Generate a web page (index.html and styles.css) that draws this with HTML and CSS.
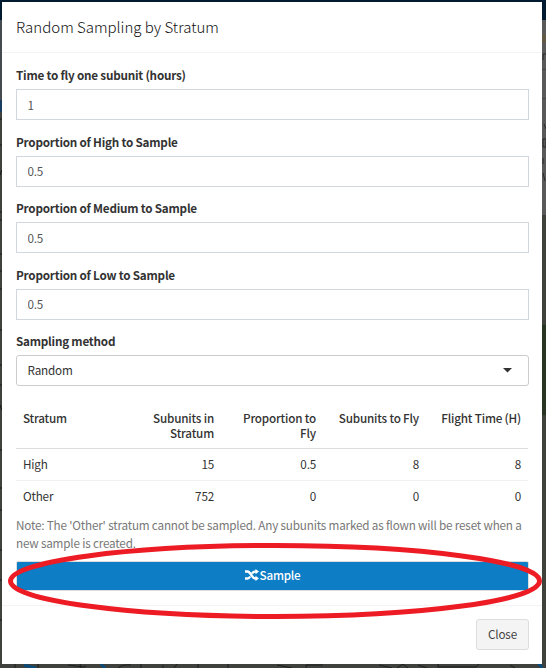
FILE: index.html
```html
<!DOCTYPE html>
<html lang="en">
<head>
<meta charset="utf-8">
<title>Random Sampling by Stratum</title>
<link rel="stylesheet" href="styles.css">
</head>
<body>
<svg class="backdrop" width="546" height="668" viewBox="0 0 546 668" aria-hidden="true">
  <rect width="546" height="668" fill="#3f413d"/>
  <rect width="546" height="20" fill="#001a2f"/>
  <rect y="20" width="2" height="80" fill="#444a50"/>
  <rect y="100" width="2" height="12" fill="#173e61"/>
  <rect x="542" y="20" width="4" height="195" fill="#595959"/>
  <rect x="542" y="34" width="4" height="9" fill="#625a46"/>
  <rect x="542" y="325" width="4" height="90" fill="#293523"/>
  <path d="M542 69.500h4M542 98.500h4" stroke="#444"/>
  <path d="M543 60v-6h3M544 124l2 5M543 139h3v8h-3zM543 158v6M543 173l2 8" fill="none" stroke="#292929"/>
  <path d="M0 119h2M0 145h2M0 175l2-5M0 212h2M0 220h2M0 254h2M0 271h2M0 289h2M0 330h2M0 365h2M0 385h2M0 405l2 5M0 450h2M0 488h2M0 510h2M0 550h2M0 580h2M0 620h2" stroke="#161816"/>
  <path d="M15 664v4M38 664v4M68 665l16 2 2-1M80 664l1 4M118 668q5-4 13-3M141 664v4M163 665v3M174 668l3-4M198 664v4M228 664v4M277 665l15 3M306 668v-3h17M379 665l13 3M397 668l6-4 5 4M418 665l9 3M438 664v3h38l3-3M510 665l5 3" fill="none" stroke="#1c1f1c"/>
  <path d="M24 665q5 2 12 3M101 664l4 4M538 664q3 1 4 4" stroke="#0b4b79" stroke-width="3" fill="none"/>
</svg>
<main class="modal">
  <header class="modal-header"><h4 class="title">Random Sampling by Stratum</h4></header>
  <section class="modal-body">
    <div class="field"><label class="label" for="time">Time to fly one subunit (hours)</label><input class="input" id="time" value="1"></div>
    <div class="field"><label class="label" for="high">Proportion of High to Sample</label><input class="input" id="high" value="0.5"></div>
    <div class="field"><label class="label" for="medium">Proportion of Medium to Sample</label><input class="input" id="medium" value="0.5"></div>
    <div class="field"><label class="label" for="low">Proportion of Low to Sample</label><input class="input" id="low" value="0.5"></div>
    <div class="field"><span class="label">Sampling method</span>
      <div class="select"><span>Random</span><svg width="9" height="5" viewBox="0 0 9 5"><path d="M0 0h9L4.500 4.500z" fill="#333"/></svg></div>
    </div>
    <table class="table">
      <thead><tr><th class="c1">Stratum</th><th class="c2">Subunits in Stratum</th><th class="c3">Proportion to Fly</th><th class="c4">Subunits to Fly</th><th class="c5">Flight Time (H)</th></tr></thead>
      <tbody>
        <tr><td>High</td><td>15</td><td>0.5</td><td>8</td><td>8</td></tr>
        <tr><td>Other</td><td>752</td><td>0</td><td>0</td><td>0</td></tr>
      </tbody>
    </table>
    <p class="note">Note: The 'Other' stratum cannot be sampled. Any subunits marked as flown will be reset when a new sample is created.</p>
    <button class="sample"><svg width="14" height="12" viewBox="0 0 14 12"><path d="M0 2.500h2.500c3.500 0 4 7 8 7H11M0 9.500h2.500c1.200 0 2-.9 2.700-2M7 4.500c.8-1.200 1.700-2 3.500-2H11" fill="none" stroke="#fff" stroke-width="2.300"/><path d="M10.500 0l3.500 2.600-3.500 2.700zM10.500 6.700L14 9.400 10.500 12z" fill="#fff"/></svg><span>Sample</span></button>
  </section>
  <footer class="modal-footer"><button class="close">Close</button></footer>
</main>
<svg class="ring" width="546" height="90" viewBox="0 0 546 90" aria-hidden="true"><ellipse cx="275" cy="41" rx="264.500" ry="35.500" fill="none" stroke="#ed1c24" stroke-width="5"/></svg>
</body>
</html>
```
FILE: styles.css
```css
* { box-sizing: border-box; }
body {
  margin: 0;
  width: 546px;
  height: 668px;
  overflow: hidden;
  font: 11.7px/20px "Noto Sans CJK SC", "Open Sans", sans-serif;
  letter-spacing: -0.19px;
  color: #333;
  background: #3f413d;
}
.backdrop { position: absolute; left: 0; top: 0; }
.modal {
  position: relative;
  width: 540px;
  height: 662px;
  margin: 2px 0 0 2px;
  background: #fff;
}
.modal-header {
  height: 51px;
  padding: 15px 14px;
  border-bottom: 1px solid #f4f4f4;
}
.title { margin: 0; font-size: 15px; line-height: 20px; font-weight: 300; color: #111; letter-spacing: 0; }
.modal-body { height: 552px; padding: 12px 13px 0 14px; }
.field { height: 66.500px; }
.label { display: block; height: 24px; line-height: 20px; font-weight: 700; letter-spacing: -0.22px; }
.input {
  display: block;
  width: 513px;
  height: 31px;
  padding: 0 10.500px 1px;
  border: 1px solid #d2d6de;
  border-radius: 0;
  font: inherit;
  letter-spacing: inherit;
  color: #555;
  background: #fff;
}
.select {
  display: flex;
  align-items: center;
  justify-content: space-between;
  width: 513px;
  height: 31px;
  padding: 0 16px 1px 10.500px;
  border: 1px solid #ccc;
  border-radius: 3px;
}
.table {
  width: 512px;
  margin-top: 5px;
  table-layout: fixed;
  border-collapse: separate;
  border-spacing: 0;
}
th, td { padding: 0 7px; text-align: right; font-weight: 400; }
th { height: 46px; padding-top: 7px; line-height: 15px; vertical-align: top; font-weight: 500; border-bottom: 1px solid #ddd; }
td { height: 32px; line-height: 20px; }
tbody tr:first-child td { border-bottom: 1px solid #f0f0f0; }
tbody tr:last-child td { padding-bottom: 2px; }
th:first-child, td:first-child { text-align: left; }
.c1 { width: 103px; }
.c2 { width: 102px; }
.c3 { width: 102px; }
.c4 { width: 103px; }
.note { margin: 3px 0 9px; line-height: 18px; color: #777; letter-spacing: -0.18px; }
.sample {
  display: flex;
  align-items: center;
  justify-content: center;
  gap: 1px;
  width: 513px;
  height: 30px;
  padding: 0 0 1px;
  border: 1px solid #ddd;
  border-radius: 2px;
  background: #0d7dc5;
  color: #fff;
  font: inherit;
  letter-spacing: -0.25px;
  font-weight: 500;
}
.modal-footer {
  display: flex;
  justify-content: flex-end;
  height: 59px;
  padding: 13px 13px 0 0;
  border-top: 1px solid #f4f4f4;
}
.close {
  width: 53px;
  height: 31px;
  padding: 0 0 1px;
  border: 1px solid #ddd;
  border-radius: 3px;
  background: #f4f4f4;
  color: #444;
  font: inherit;
  letter-spacing: inherit;
}
.ring { position: absolute; left: 0; top: 540px; }
```
